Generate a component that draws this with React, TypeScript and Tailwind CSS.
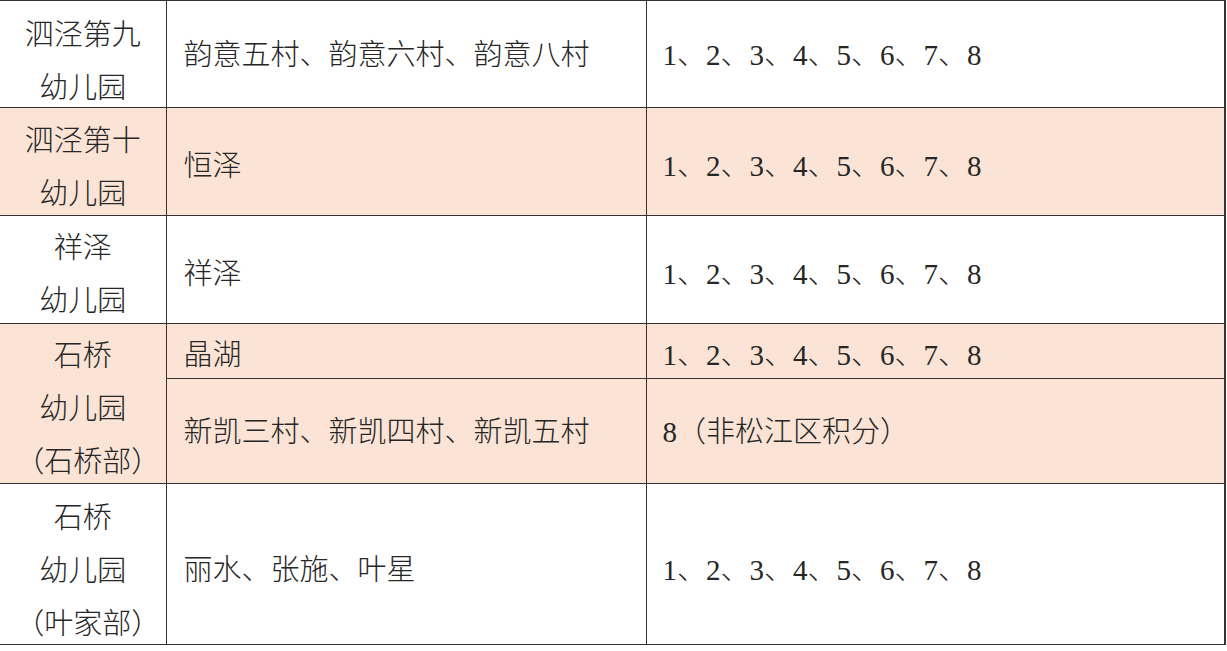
const font = { fontFamily: '"Liberation Serif", "Noto Sans CJK SC", serif' }

const nums = '1、2、3、4、5、6、7、8'

interface Row {
  school: string[]
  schoolShift: string
  parts: { area: string; scope: string; h: string; shift: string }[]
  tint: boolean
}

const rows: Row[] = [
  { school: ['泗泾第九', '幼儿园'], schoolShift: 'translate-y-[8px]', parts: [{ area: '韵意五村、韵意六村、韵意八村', scope: nums, h: 'h-[107px]', shift: 'translate-y-[2px]' }], tint: false },
  { school: ['泗泾第十', '幼儿园'], schoolShift: 'translate-y-[6px]', parts: [{ area: '恒泽', scope: nums, h: 'h-[108px]', shift: 'translate-y-[5px]' }], tint: true },
  { school: ['祥泽', '幼儿园'], schoolShift: 'translate-y-[5px]', parts: [{ area: '祥泽', scope: nums, h: 'h-[108px]', shift: 'translate-y-[5px]' }], tint: false },
  {
    school: ['石桥', '幼儿园', '（石桥部）'],
    schoolShift: 'translate-y-[6px]',
    parts: [
      { area: '晶湖', scope: nums, h: 'h-[55px]', shift: 'translate-y-[5px]' },
      { area: '新凯三村、新凯四村、新凯五村', scope: '8（非松江区积分）', h: 'h-[105px]', shift: 'translate-y-[2px]' },
    ],
    tint: true,
  },
  { school: ['石桥', '幼儿园', '（叶家部）'], schoolShift: 'translate-y-[7px]', parts: [{ area: '丽水、张施、叶星', scope: nums, h: 'h-[161px]', shift: 'translate-y-[7px]' }], tint: false },
]

// bracketed campus line sits a little right of centre in the original
function SchoolLine({ text }: { text: string }) {
  if (!text.startsWith('（')) return <div>{text}</div>
  return <div className="pl-[10px]">{text}</div>
}

export default function App() {
  return (
    <div className="w-[1227px] h-[651px] bg-white overflow-hidden text-[#262626] text-[29px] font-light" style={font}>
      <table className="table-fixed border-collapse w-[1225px]">
        <colgroup>
          <col className="w-[166px]" />
          <col className="w-[480px]" />
          <col className="w-[579px]" />
        </colgroup>
        <tbody>
          {rows.map((r, i) =>
            r.parts.map((p, j) => (
              <tr key={`${i}-${j}`} className={`${p.h} ${r.tint ? 'bg-[#fbe4d5]' : ''}`}>
                {j === 0 && (
                  <td rowSpan={r.parts.length} className="border border-l-0 border-[#333] text-center align-middle leading-[53px] p-0">
                    <div className={r.schoolShift}>
                      {r.school.map(s => <SchoolLine key={s} text={s} />)}
                    </div>
                  </td>
                )}
                <td className="border border-[#333] align-middle pl-[17px] p-0 whitespace-nowrap">
                  <div className={p.shift}>{p.area}</div>
                </td>
                <td className="border border-r-2 border-[#333] align-middle pl-[16px] p-0 whitespace-nowrap">
                  <div className={p.shift}>{p.scope}</div>
                </td>
              </tr>
            ))
          )}
        </tbody>
      </table>
    </div>
  )
}
